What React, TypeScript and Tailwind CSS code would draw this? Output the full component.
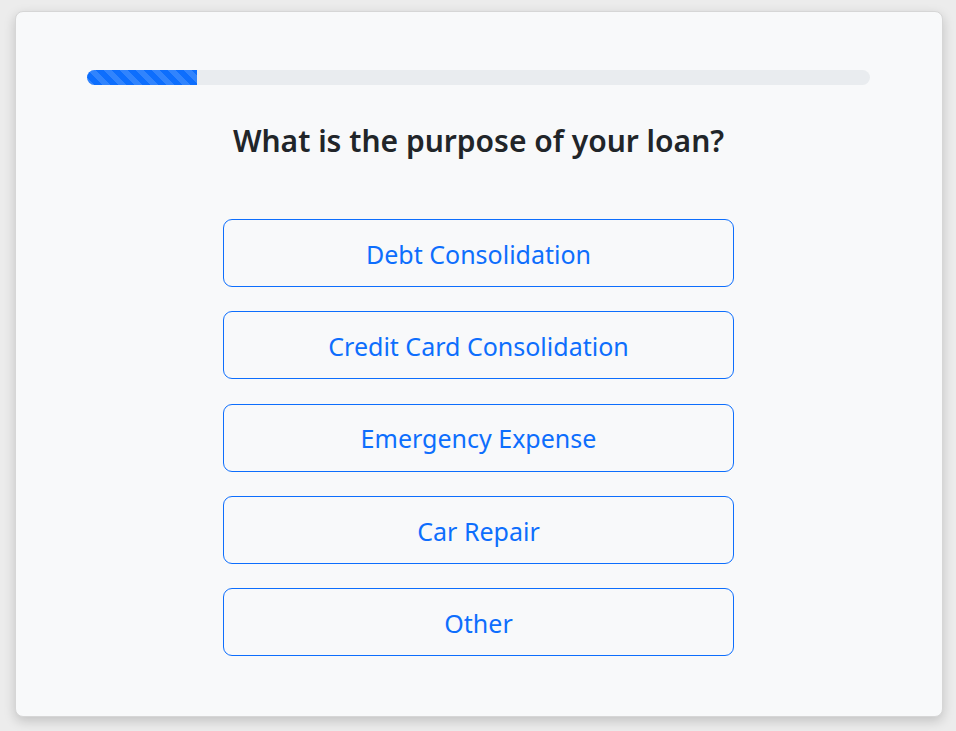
import React from 'react';

const options = [
  'Debt Consolidation',
  'Credit Card Consolidation',
  'Emergency Expense',
  'Car Repair',
  'Other',
];

const App: React.FC = () => {
  return (
    <div
      className="min-h-[731px] bg-[#ececec] pt-[11px] pl-[15px] pr-[14px] pb-[15px]"
      style={{ fontFamily: '"Noto Sans", "Open Sans", sans-serif' }}
    >
      <div className="h-[706px] w-[928px] rounded-lg border border-[#d6d6d6] bg-[#f8f9fa] pl-[71px] pr-[72px] pt-[58px] shadow-[0_4px_12px_rgba(0,0,0,0.18)]">
        <div className="h-[15px] w-full overflow-hidden rounded-full bg-[#e9ecef]">
          <div className="h-full w-[14%] bg-[#0d6efd] bg-[linear-gradient(45deg,rgba(255,255,255,.15)_25%,transparent_25%,transparent_50%,rgba(255,255,255,.15)_50%,rgba(255,255,255,.15)_75%,transparent_75%,transparent)] bg-[length:16px_16px]" />
        </div>

        <h2 className="mt-[38px] text-center text-[30px] font-semibold leading-[36px] text-[#212529]">
          What is the purpose of your loan?
        </h2>

        <div className="mt-[60px] flex flex-col items-center gap-[24.25px]">
          {options.map((opt) => (
            <button
              key={opt}
              className="flex h-[68px] w-[511px] items-center justify-center rounded-[9px] border border-[#0d6efd] bg-transparent pt-[3px] text-[25px] text-[#0d6efd]"
            >
              {opt}
            </button>
          ))}
        </div>
      </div>
    </div>
  );
};

export default App;
